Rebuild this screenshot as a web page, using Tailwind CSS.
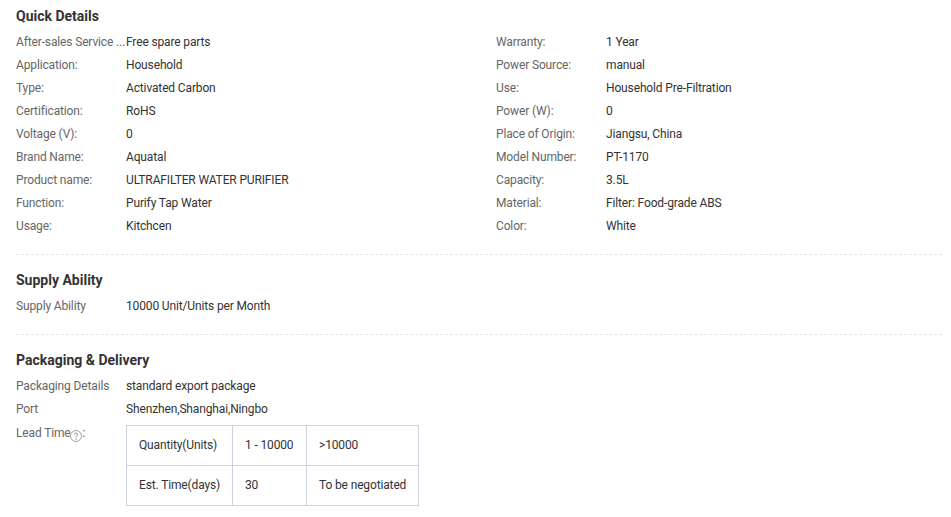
<!DOCTYPE html>
<html>
<head>
<meta charset="utf-8">
<script src="https://cdn.jsdelivr.net/npm/@tailwindcss/browser@4"></script>
</head>
<body class="bg-white font-['Roboto',sans-serif] text-xs text-[#333333]">
<div class="w-[951px] h-[517px] overflow-hidden pl-4 pr-[9px]">
  <section class="h-[255px] border-b border-dashed border-[#e5e9e5] pt-[7px]">
    <h3 class="text-sm font-bold leading-[18px] mb-[6px]">Quick Details</h3>
    <div class="grid grid-cols-[480px_1fr] auto-rows-[23px] leading-[23px] tracking-[-0.14px]">
      <div class="flex"><span class="w-[110px] text-[#666666] whitespace-nowrap">After-sales Service ...</span><span>Free spare parts</span></div>
      <div class="flex"><span class="w-[110px] text-[#666666]">Warranty:</span><span>1 Year</span></div>
      <div class="flex"><span class="w-[110px] text-[#666666]">Application:</span><span>Household</span></div>
      <div class="flex"><span class="w-[110px] text-[#666666]">Power Source:</span><span>manual</span></div>
      <div class="flex"><span class="w-[110px] text-[#666666]">Type:</span><span>Activated Carbon</span></div>
      <div class="flex"><span class="w-[110px] text-[#666666]">Use:</span><span>Household Pre-Filtration</span></div>
      <div class="flex"><span class="w-[110px] text-[#666666]">Certification:</span><span>RoHS</span></div>
      <div class="flex"><span class="w-[110px] text-[#666666]">Power (W):</span><span>0</span></div>
      <div class="flex"><span class="w-[110px] text-[#666666]">Voltage (V):</span><span>0</span></div>
      <div class="flex"><span class="w-[110px] text-[#666666]">Place of Origin:</span><span>Jiangsu, China</span></div>
      <div class="flex"><span class="w-[110px] text-[#666666]">Brand Name:</span><span>Aquatal</span></div>
      <div class="flex"><span class="w-[110px] text-[#666666]">Model Number:</span><span>PT-1170</span></div>
      <div class="flex"><span class="w-[110px] text-[#666666]">Product name:</span><span>ULTRAFILTER WATER PURIFIER</span></div>
      <div class="flex"><span class="w-[110px] text-[#666666]">Capacity:</span><span>3.5L</span></div>
      <div class="flex"><span class="w-[110px] text-[#666666]">Function:</span><span>Purify Tap Water</span></div>
      <div class="flex"><span class="w-[110px] text-[#666666]">Material:</span><span>Filter: Food-grade ABS</span></div>
      <div class="flex"><span class="w-[110px] text-[#666666]">Usage:</span><span>Kitchcen</span></div>
      <div class="flex"><span class="w-[110px] text-[#666666]">Color:</span><span>White</span></div>
    </div>
  </section>
  <section class="h-[80px] border-b border-dashed border-[#e5e9e5] pt-4">
    <h3 class="text-sm font-bold leading-[18px] mb-[6px]">Supply Ability</h3>
    <div class="flex leading-[23px] tracking-[-0.14px]"><span class="w-[110px] text-[#666666]">Supply Ability</span><span>10000 Unit/Units per Month</span></div>
  </section>
  <section class="pt-4 tracking-[-0.14px]">
    <h3 class="text-sm font-bold leading-[18px] mb-[6px] tracking-normal">Packaging &amp; Delivery</h3>
    <div class="flex leading-[23px]"><span class="w-[110px] text-[#666666]">Packaging Details</span><span>standard export package</span></div>
    <div class="flex leading-[23px]"><span class="w-[110px] text-[#666666]">Port</span><span>Shenzhen,Shanghai,Ningbo</span></div>
    <div class="flex leading-[23px]">
      <span class="w-[110px] text-[#666666] flex items-start pt-[1px]">Lead Time<svg class="mt-2 w-3 h-3 -ml-px mr-px" viewBox="0 0 12 12" fill="none"><circle cx="6" cy="6" r="5.5" stroke="#a0a0a0"/><path d="M4.4 4.6a1.6 1.6 0 1 1 2.4 1.4c-.5.3-.8.6-.8 1.3" stroke="#777777" stroke-width="0.9"/><circle cx="6" cy="9.2" r="0.6" fill="#777777"/></svg>:</span>
      <table class="border-collapse mt-1 h-[81px] w-[293px]">
        <tbody>
          <tr class="h-10">
            <td class="border border-[#c9d3e0] pl-3 w-[106px]">Quantity(Units)</td>
            <td class="border border-[#c9d3e0] pl-3 w-[74px]">1 - 10000</td>
            <td class="border border-[#c9d3e0] pl-3">&gt;10000</td>
          </tr>
          <tr class="h-10">
            <td class="border border-[#c9d3e0] pl-3">Est. Time(days)</td>
            <td class="border border-[#c9d3e0] pl-3">30</td>
            <td class="border border-[#c9d3e0] pl-3">To be negotiated</td>
          </tr>
        </tbody>
      </table>
    </div>
  </section>
</div>
</body>
</html>
